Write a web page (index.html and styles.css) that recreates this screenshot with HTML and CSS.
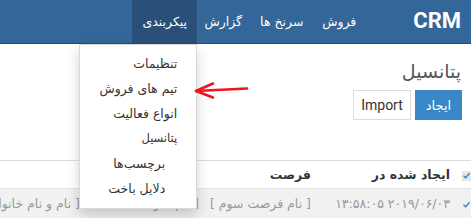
FILE: index.html
```html
<!DOCTYPE html>
<html lang="fa" dir="rtl">
<head>
<meta charset="utf-8">
<title>CRM</title>
<link rel="stylesheet" href="styles.css">
</head>
<body>
<header class="navbar">
  <a class="brand" href="#">CRM</a>
  <ul class="nav">
    <li class="nav-item nav-sales"><a href="#">فروش</a></li>
    <li class="nav-item nav-leads"><a href="#">سرنخ ها</a></li>
    <li class="nav-item nav-report"><a href="#">گزارش</a></li>
    <li class="nav-item nav-config active">
      <a href="#">پیکربندی</a>
      <ul class="dropdown">
        <li><a href="#">تنظیمات</a></li>
        <li><a href="#">تیم های فروش</a></li>
        <li><a href="#">انواع فعالیت</a></li>
        <li><a href="#" class="small">پتانسیل</a></li>
        <li><a href="#" class="indent">برچسب‌ها</a></li>
        <li><a href="#" class="indent">دلایل باخت</a></li>
      </ul>
    </li>
  </ul>
</header>

<svg class="pointer" width="56" height="20" viewBox="0 0 56 20">
  <path d="M3 11 L54 8.5" stroke="#f0141e" stroke-width="2.6" fill="none" stroke-linecap="round"/>
  <path d="M20 3.5 L3 11 L20 17.5" stroke="#f0141e" stroke-width="2.6" fill="none" stroke-linecap="round" stroke-linejoin="round"/>
</svg>

<main class="content">
  <h1 class="title">پتانسیل</h1>
  <div class="actions">
    <button class="btn btn-primary">ایجاد</button>
    <button class="btn btn-default">Import</button>
  </div>

  <table class="grid">
    <colgroup>
      <col class="c-check">
      <col class="c-date">
      <col class="c-opp">
      <col class="c-comp">
      <col>
    </colgroup>
    <thead>
      <tr>
        <th class="check"><span class="box"><svg width="9" height="9" viewBox="0 0 9 9"><path d="M1.5 4.8 L3.6 6.8 L7.6 2.2" stroke="#3a7fc0" stroke-width="1.3" fill="none"/></svg></span></th>
        <th>ایجاد شده در</th>
        <th>فرصت</th>
        <th></th>
        <th></th>
      </tr>
    </thead>
    <tbody>
      <tr>
        <td class="check"><span class="box plain"><svg width="9" height="9" viewBox="0 0 9 9"><path d="M1.5 4.8 L3.6 6.8 L7.6 2.2" stroke="#3a7fc0" stroke-width="1.3" fill="none"/></svg></span></td>
        <td>۲۰۱۹/۰۶/۰۳ ۱۳:۵۸:۰۵</td>
        <td>[ نام فرصت سوم ]</td>
        <td>[ نام شرکت ]</td>
        <td>[ نام و نام خانوادگی ]</td>
      </tr>
    </tbody>
  </table>
</main>
</body>
</html>
```

FILE: styles.css
```css
* { box-sizing: border-box; }

html, body {
  margin: 0;
  padding: 0;
  width: 471px;
  height: 218px;
  overflow: hidden;
  background: #fff;
}

body {
  direction: rtl;
  font-family: "DejaVu Sans", sans-serif;
  font-size: 13px;
  color: #333;
  position: relative;
}

a { text-decoration: none; color: inherit; }

.navbar {
  display: flex;
  align-items: stretch;
  height: 44px;
  background: #336699;
  border-bottom: 1px solid #244b74;
  padding-right: 10px;
}

.brand {
  font-family: Roboto, "Liberation Sans", sans-serif;
  font-weight: 700;
  font-size: 22px;
  color: #fff;
  line-height: 42px;
  margin-left: 49px;
}

.nav {
  list-style: none;
  margin: 0;
  padding: 0;
  display: flex;
}

.nav-item {
  position: relative;
}

.nav-item > a {
  display: block;
  height: 43px;
  line-height: 43px;
  padding: 0;
  text-align: center;
  color: #fff;
  font-size: 12.5px;
  white-space: nowrap;
}

.nav-sales { width: 50px; }
.nav-leads { width: 65px; }
.nav-report { width: 52px; }
.nav-config { width: 65px; }

.nav-item.active > a {
  background: #2a4f78;
}

.dropdown {
  position: absolute;
  top: 44px;
  right: 0;
  width: 118px;
  margin: 0;
  padding: 6px 0 7px;
  list-style: none;
  background: #fff;
  border: 1px solid rgba(0,0,0,.15);
  box-shadow: 0 6px 12px rgba(0,0,0,.175);
  z-index: 10;
}

.dropdown a {
  display: block;
  line-height: 25px;
  padding-right: 19px;
  color: #333;
  font-size: 12.5px;
  white-space: nowrap;
}

.dropdown a.small { font-size: 11.5px; }
.dropdown a.indent { padding-right: 31px; }

.pointer {
  position: absolute;
  left: 193px;
  top: 80px;
  z-index: 11;
}

.title {
  margin: 14px 10px 0 0;
  font-size: 19px;
  font-weight: normal;
  line-height: 26px;
  color: #555;
}

.actions {
  display: flex;
  gap: 4px;
  margin: 6px 9px 0 0;
}

.btn {
  height: 30px;
  padding: 0;
  font-size: 13px;
  border: 1px solid transparent;
  border-radius: 0;
  font-family: "DejaVu Sans", sans-serif;
}

.btn-primary {
  width: 47px;
  background: #3a87c8;
  border-color: #3a87c8;
  color: #fff;
}

.btn-default {
  width: 58px;
  background: #fff;
  border-color: #ddd;
  color: #333;
  font-family: Roboto, "Liberation Sans", sans-serif;
  font-size: 14px;
}

.grid {
  margin-top: 40px;
  width: 471px;
  table-layout: fixed;
  border-collapse: collapse;
  border-top: 1px solid #ddd;
}

.c-check { width: 13px; }
.c-date { width: 139px; }
.c-opp { width: 112px; }
.c-comp { width: 119px; }

.grid th, .grid td {
  text-align: right;
  white-space: nowrap;
  overflow: hidden;
  padding: 0 8px 0 0;
  font-size: 12.5px;
}

.grid th {
  height: 28px;
  font-weight: bold;
  color: #333;
  border-bottom: 1px solid #e4e4e4;
}

.grid td {
  height: 29px;
  background: #f1f1f1;
  color: #999;
}

.grid .check {
  padding: 0;
  overflow: visible;
}

.box {
  display: inline-flex;
  align-items: center;
  justify-content: center;
  width: 9px;
  height: 10px;
  background: #e6e6e6;
  vertical-align: middle;
}

.box.plain { background: transparent; }
```
